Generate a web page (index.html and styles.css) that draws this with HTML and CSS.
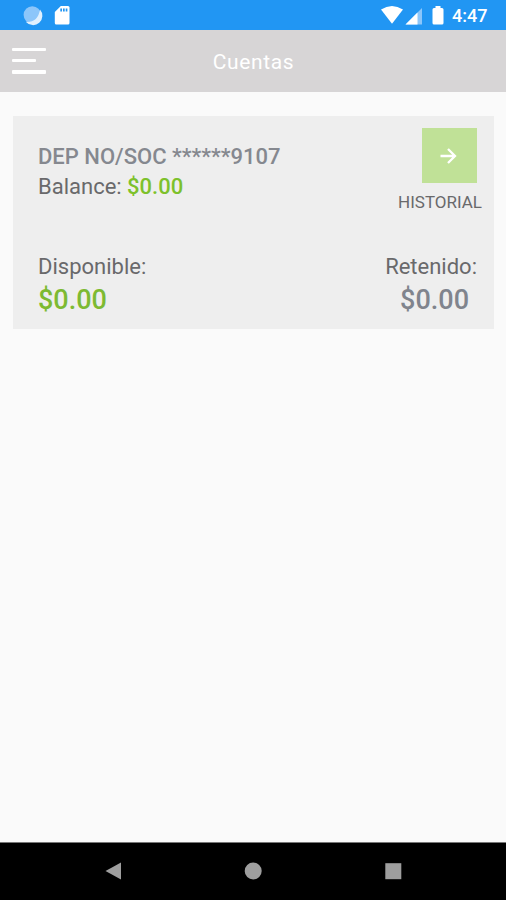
FILE: index.html
```
<!DOCTYPE html>
<html lang="es">
<head>
    <meta charset="UTF-8">
    <meta name="viewport" content="width=device-width, initial-scale=1.0">
    <title>Cuentas</title>
    <link rel="stylesheet" href="styles.css">
</head>
<body>
    <div class="status-bar">
        <svg class="status-left" width="60" height="30" viewBox="0 0 60 30">
            <circle cx="17.300" cy="15" r="8.700" fill="#8cc6fa"/>
            <path d="M25 9.500A9 9 0 0 1 11 22Q23 22.500 25 9.500Z" fill="#e0f0fe"/>
            <path d="M40.300 11.500L45.800 6H53Q54.500 6 54.500 7.500V23Q54.500 24.500 53 24.500H41.300Q39.800 24.500 39.800 23V12.500Z" fill="#fff"/>
            <path d="M45.300 8.500h1.700v3h-1.700zM48 8.500h1.700v3h-1.700zM50.700 8.500h1.700v3h-1.700z" fill="#2196f3"/>
        </svg>
        <svg class="status-right" width="64" height="30" viewBox="0 0 64 30">
            <path d="M0 9.500Q11 2.500 22 9.500L11 23.700Z" fill="#fff"/>
            <path d="M24.500 24.500L41 8V24.500Z" fill="#8cc6fa"/>
            <path d="M24.500 24.500L36.500 12.500V24.500Z" fill="#fff"/>
            <path d="M54.500 6h5v2H61q1.500 0 1.500 1.500V23q0 1.500-1.500 1.500h-8q-1.500 0-1.500-1.500V9.500Q51.500 8 53 8h1.500z" fill="#fff"/>
        </svg>
        <span class="time">4:47</span>
    </div>

    <div class="header">
        <div class="menu">
            <span></span>
            <span class="short"></span>
            <span></span>
        </div>
        <h1>Cuentas</h1>
    </div>

    <div class="content">
        <div class="card">
            <div class="row">
                <div class="account">
                    <div class="name">DEP NO/SOC ******9107</div>
                    <div class="balance">Balance: <b>$0.00</b></div>
                </div>
                <div class="history">
                    <div class="history-button">
                        <svg width="20" height="20" viewBox="0 0 20 20" fill="none" stroke="#fff" stroke-width="2.300">
                            <path d="M0.500 10H15M8 3L15 10L8 17"/>
                        </svg>
                    </div>
                    <div class="history-label">HISTORIAL</div>
                </div>
            </div>
            <div class="row amounts">
                <div>
                    <div class="label">Disponible:</div>
                    <div class="amount green">$0.00</div>
                </div>
                <div class="held">
                    <div class="label">Retenido:</div>
                    <div class="amount">$0.00</div>
                </div>
            </div>
        </div>
    </div>

    <div class="nav-bar">
        <svg width="18" height="20" viewBox="0 0 18 20"><path d="M1.500 10L17 1.500V18.500Z" fill="#9e9e9e"/></svg>
        <svg width="18" height="20" viewBox="0 0 18 20"><circle cx="9.200" cy="10" r="8.500" fill="#9e9e9e"/></svg>
        <svg width="18" height="20" viewBox="0 0 18 20"><rect x="1.300" y="2.200" width="16" height="16" fill="#9e9e9e"/></svg>
    </div>
</body>
</html>
```

FILE: styles.css
```
body {
    margin: 0;
    height: 900px;
    display: flex;
    flex-direction: column;
    font-family: Roboto, sans-serif;
    background-color: #fafafa;
    color: #69696b;
}
.status-bar {
    height: 30px;
    display: flex;
    align-items: center;
    padding: 0 19px 0 15px;
    background: #2196f3;
}
.status-right {
    margin-left: auto;
}
.time {
    width: 35px;
    margin-left: 7px;
    padding-top: 2px;
    color: white;
    font-size: 18px;
    font-weight: 500;
    line-height: 28px;
}
.header {
    height: 61.5px;
    display: grid;
    grid-template-columns: 34px 1fr 34px;
    align-items: center;
    padding: 0 12px;
    background: #d7d5d6;
}
.menu {
    display: flex;
    flex-direction: column;
    gap: 8px;
}
.menu span {
    height: 3.3px;
    border-radius: 1px;
    background: white;
}
.menu .short {
    width: 24px;
}
h1 {
    margin: 0;
    padding: 2px 0 0 1px;
    color: white;
    text-align: center;
    font-size: 21px;
    font-weight: 400;
    letter-spacing: 0.6px;
}
.content {
    flex: 1;
    padding: 24.5px 12px 0 13px;
}
.card {
    height: 212.5px;
    box-sizing: border-box;
    padding: 12px 12px 0 25px;
    background: #eeeeee;
}
.row {
    display: flex;
    justify-content: space-between;
}
.account {
    padding-top: 14px;
    font-size: 22px;
    line-height: 29.5px;
}
.name {
    color: #85888f;
    font-weight: 500;
}
.balance b {
    color: #7dc12b;
    font-weight: 500;
}
.history {
    display: flex;
    flex-direction: column;
    align-items: flex-end;
}
.history-button {
    width: 55px;
    height: 55px;
    margin-right: 5px;
    display: flex;
    align-items: center;
    justify-content: center;
    background: #c0e197;
}
.history-label {
    margin-top: 8px;
    font-size: 17px;
    line-height: 22px;
}
.amounts {
    margin-top: 39px;
    padding-right: 5px;
}
.label {
    font-size: 22px;
    line-height: 30px;
}
.amount {
    color: #80848d;
    font-size: 27px;
    font-weight: 500;
    line-height: 36px;
}
.amount.green {
    color: #7dba32;
}
.held {
    text-align: right;
}
.held .amount {
    padding-right: 8px;
}
.nav-bar {
    height: 58px;
    box-sizing: border-box;
    display: flex;
    justify-content: space-between;
    padding: 18px 104px 0;
    border-top: 1px solid #777;
    background: black;
}
```
